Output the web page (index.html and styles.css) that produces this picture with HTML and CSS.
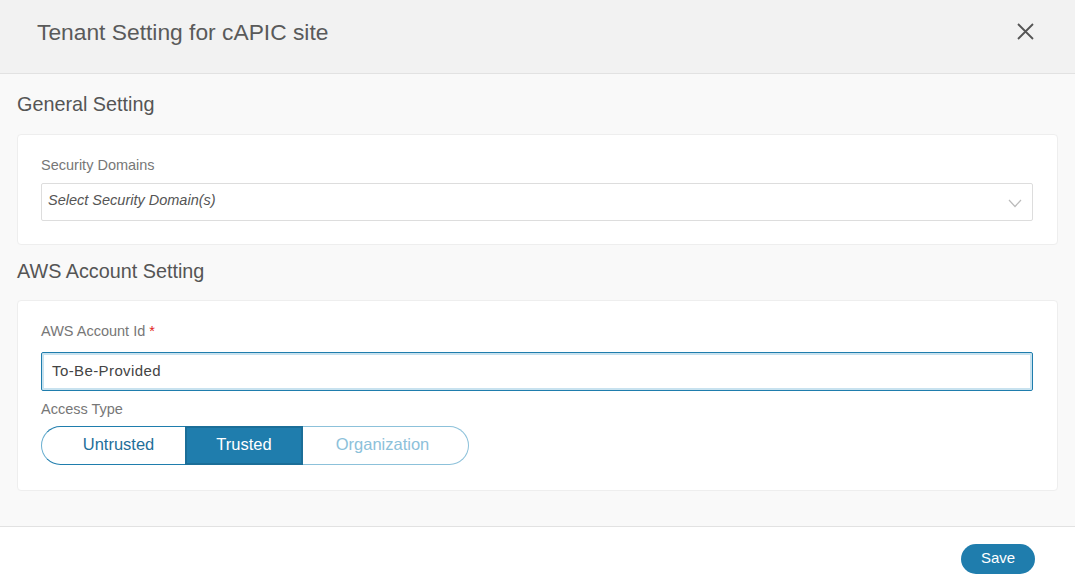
FILE: index.html
```html
<!DOCTYPE html>
<html>
<head>
<meta charset="utf-8">
<link rel="stylesheet" href="styles.css">
</head>
<body>
<div class="modal">
  <header class="modal-header">
    <h1 class="modal-title">Tenant Setting for cAPIC site</h1>
    <button class="close-btn" aria-label="Close">
      <svg width="17" height="17" viewBox="0 0 17 17"><path d="M1 1L16 16M16 1L1 16" stroke="#555" stroke-width="1.8" fill="none"/></svg>
    </button>
  </header>
  <main class="modal-body">
    <h2 class="section-title">General Setting</h2>
    <section class="card card-general">
      <label class="field-label">Security Domains</label>
      <div class="select">
        <span class="placeholder">Select Security Domain(s)</span>
        <svg class="chevron" width="14" height="9" viewBox="0 0 14 9"><path d="M1 1L7 7.5L13 1" stroke="#bbb" stroke-width="1.2" fill="none"/></svg>
      </div>
    </section>
    <h2 class="section-title">AWS Account Setting</h2>
    <section class="card card-aws">
      <label class="field-label">AWS Account Id <span class="req">*</span></label>
      <div class="input">To-Be-Provided</div>
      <label class="field-label label-access">Access Type</label>
      <div class="segmented">
        <span class="seg seg-untrusted">Untrusted</span>
        <span class="seg seg-trusted">Trusted</span>
        <span class="seg seg-org">Organization</span>
      </div>
    </section>
  </main>
  <footer class="modal-footer">
    <button class="save-btn">Save</button>
  </footer>
</div>
</body>
</html>
```
FILE: styles.css
```css
* { box-sizing: border-box; }
html, body { margin: 0; padding: 0; }
body {
  font-family: "Liberation Sans", Arial, sans-serif;
  background: #fff;
  color: #555;
  width: 1075px;
  height: 588px;
  overflow: hidden;
}
.modal { display: flex; flex-direction: column; height: 588px; }
.modal-header {
  height: 74px;
  background: #f2f2f2;
  border-bottom: 1px solid #e2e2e2;
  display: flex;
  align-items: center;
  justify-content: space-between;
  padding: 0 41px 0 37px;
}
.modal-title {
  margin: 0;
  font-weight: normal;
  font-size: 22.8px;
  color: #5a5a5a;
  padding-bottom: 9px;
}
.close-btn {
  border: 0;
  background: none;
  padding: 0;
  width: 17px;
  height: 17px;
  display: flex;
  margin-bottom: 10px;
}
.modal-body {
  background: #f9f9f9;
  height: 453px;
  border-bottom: 1px solid #e2e2e2;
  padding: 18px 17px 0 17px;
}
.section-title {
  margin: 0;
  font-weight: normal;
  font-size: 19.8px;
  color: #555;
  line-height: 24px;
}
.card {
  background: #fff;
  border: 1px solid #eee;
  border-radius: 4px;
  padding: 22px 24px 0 23px;
}
.card-general { margin-top: 18px; height: 111px; margin-bottom: 14px; }
.card-aws { margin-top: 17px; height: 191px; }
.field-label {
  display: block;
  font-size: 14.5px;
  color: #777;
  line-height: 17px;
}
.req { color: #e2231a; }
.select {
  margin-top: 9px;
  height: 38px;
  border: 1px solid #ddd;
  border-radius: 2px;
  display: flex;
  align-items: center;
  justify-content: space-between;
  padding: 0 10px 0 6px;
}
.placeholder { font-style: italic; font-size: 14.5px; color: #555; padding-bottom: 4px; }
.chevron { margin-top: 3px; }
.input {
  margin-top: 12px;
  height: 39px;
  border: 1px solid #1f7dad;
  box-shadow: inset 0 0 0 2px #c8e2ef;
  border-radius: 2px;
  display: flex;
  align-items: center;
  padding: 0 10px 2px 10px;
  font-size: 15px;
  letter-spacing: 0.4px;
  color: #444;
}
.label-access { margin-top: 10px; }
.segmented { display: flex; margin-top: 8px; height: 39px; }
.seg {
  display: flex;
  align-items: center;
  justify-content: center;
  font-size: 16.5px;
  height: 39px;
  padding-bottom: 3px;
}
.seg-untrusted {
  width: 144px;
  color: #1f6f9a;
  border: 1px solid #1f7dad;
  border-left-color: #6aafd0;
  border-right: 0;
  border-radius: 20px 0 0 20px;
  padding-left: 10px;
}
.seg-trusted {
  width: 118px;
  background: #1f7dad;
  color: #fff;
  border: 2px solid #1b6e98;
}
.seg-org {
  width: 166px;
  color: #8cc1da;
  border: 1px solid #8cc1da;
  border-left: 0;
  border-radius: 0 20px 20px 0;
  padding-right: 6px;
}
.modal-footer {
  flex: 1;
  background: #fff;
  display: flex;
  justify-content: flex-end;
  align-items: flex-start;
  padding: 17px 40px 0 0;
}
.save-btn {
  width: 74px;
  height: 30px;
  border: 0;
  border-radius: 15px;
  background: #1f7dad;
  color: #fff;
  font-family: "Liberation Sans", Arial, sans-serif;
  font-size: 15px;
  padding: 0 0 4px 0;
}
```
